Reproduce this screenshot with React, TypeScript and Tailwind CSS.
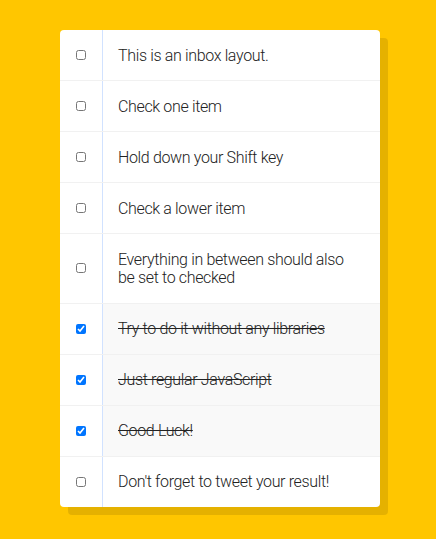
import React, { useState } from "react";

const items = [
  { text: "This is an inbox layout.", checked: false },
  { text: "Check one item", checked: false },
  { text: "Hold down your Shift key", checked: false },
  { text: "Check a lower item", checked: false },
  { text: "Everything in between should also be set to checked", checked: false },
  { text: "Try to do it without any libraries", checked: true },
  { text: "Just regular JavaScript", checked: true },
  { text: "Good Luck!", checked: true },
  { text: "Don't forget to tweet your result!", checked: false },
];

export default function App() {
  const [state, setState] = useState(items.map((i) => i.checked));
  return (
    <div className="min-h-screen w-full bg-[#ffc600] pt-[30px] pb-[30px]" style={{ fontFamily: 'Roboto, "Liberation Sans", Arial, sans-serif' }}>
      <div className="ml-[60px] w-[320px] rounded-[4px] bg-white shadow-[8px_8px_0_rgba(0,0,0,0.1)]">
        {items.map((item, i) => (
          <div
            key={i}
            className={`flex items-center ${i < items.length - 1 ? "border-b border-[#F1F1F1]" : ""}`}
          >
            <input
              type="checkbox"
              checked={state[i]}
              onChange={() => setState((s) => s.map((v, j) => (j === i ? !v : v)))}
              className="m-[16px] h-[10px] w-[10px] shrink-0"
            />
            <p
              className={`m-0 flex-1 border-l border-[#D1E2FF] pt-[16.5px] pb-[15px] pl-[15px] pr-[20px] text-[16px] leading-[18.5px] font-light tracking-[-0.35px] text-[#222] ${
                state[i] ? "bg-[#F9F9F9] line-through" : ""
              }`}
            >
              {item.text}
            </p>
          </div>
        ))}
      </div>
    </div>
  );
}
